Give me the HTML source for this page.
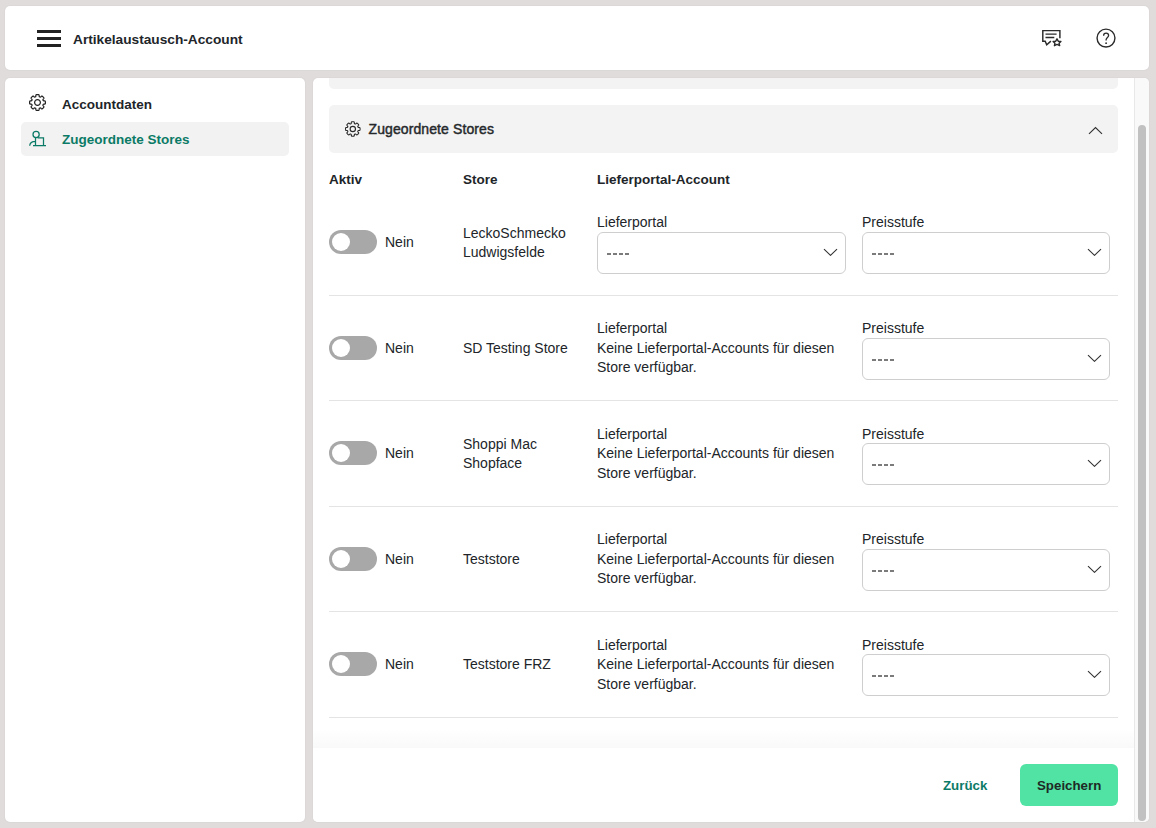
<!DOCTYPE html>
<html><head><meta charset="utf-8">
<style>
*{box-sizing:border-box;margin:0;padding:0}
html,body{width:1156px;height:828px;overflow:hidden}
body{background:#e0dcdb;font-family:"Liberation Sans",sans-serif;color:#212529;font-size:14px;position:relative}
.card{position:absolute;background:#fff;border-radius:5px;overflow:hidden;box-shadow:0 0 2px rgba(0,0,0,0.07)}
#hdr{left:5px;top:6px;width:1144px;height:64px}
#side{left:5px;top:78px;width:300px;height:744px}
#main{left:313px;top:78px;width:836px;height:744px}
.abs{position:absolute}
.ham{position:absolute;left:32px;width:24px;height:3px;background:#222}
.title{position:absolute;left:68px;top:24px;font-weight:700;font-size:13.7px;line-height:20px;white-space:nowrap}
.nav{position:absolute;left:16px;width:268px;height:34px;border-radius:5px}
.nav .t{position:absolute;left:41px;top:9px;font-weight:700;font-size:13.5px;line-height:20px;white-space:nowrap}
.nav.act{background:#f2f2f2}
.nav.act .t{color:#0b7a66}
.lbl{white-space:nowrap;line-height:20px}
.nm{line-height:19.4px}
.th{font-weight:700;font-size:13.5px}
.sh{left:55.5px;top:41px;font-weight:400;font-size:14px;-webkit-text-stroke:0.45px #26292c;letter-spacing:0.1px;line-height:20px;white-space:nowrap;color:#26292c}
.b{font-weight:700}
.sel{position:absolute;height:42px;border:1px solid #cecece;border-radius:6px;background:#fff}
.sel .v{position:absolute;left:9px;top:20px;width:22px;height:2px;background:repeating-linear-gradient(to right,#7b7b7b 0 4px,transparent 4px 6px)}
.tog{position:absolute;left:16px;width:48px;height:24px;border-radius:12px;background:#a8a8a8}
.tog::after{content:"";position:absolute;left:3px;top:3px;width:18px;height:18px;border-radius:50%;background:#fff}
.div{position:absolute;left:16px;width:789px;height:1px;background:#e4e4e4}
</style></head><body>
<div id="hdr" class="card">
  <div class="ham" style="top:24px"></div>
  <div class="ham" style="top:31px"></div>
  <div class="ham" style="top:38px"></div>
  <div class="title">Artikelaustausch-Account</div>
</div>
<svg class="abs" style="left:1036px;top:24px" width="34" height="32" viewBox="1036 24 34 32"><g fill="none" stroke="#2b2b2b" stroke-width="1.45" stroke-linejoin="miter"><path d="M1059.9 38.3 V30.6 H1042.8 V41.2 H1045.2 L1046.7 44.8 L1050.9 41.1"/><path d="M1045.5 34.1 H1056.6 M1045.5 37.45 H1054.3" stroke-width="1.4"/><g transform="translate(1057 42.3) scale(1.12) translate(-1057 -42.3)"><path d="M1057 39.2 L1058.1 41.3 L1060.5 41.5 L1058.8 43.1 L1059.4 45.3 L1057 44.2 L1054.7 45.3 L1055.2 43.1 L1053.5 41.5 L1055.9 41.3 Z" stroke-width="1.25" stroke-linejoin="round"/></g></g></svg>
<svg class="abs" style="left:1095px;top:27px" width="22" height="22" viewBox="1095 27 22 22"><g fill="none" stroke="#2b2b2b" stroke-width="1.4"><circle cx="1106" cy="38.1" r="8.95"/><path d="M1103.6 35.7 C1103.6 34.1 1104.7 33.2 1106.1 33.2 C1107.5 33.2 1108.6 34.1 1108.6 35.5 C1108.6 37.4 1106.1 37.6 1106.1 39.8 V40.6" stroke-width="1.3"/></g><circle cx="1106.1" cy="43.2" r="0.9" fill="#2b2b2b"/></svg>
<div id="side" class="card">
  <svg class="abs" style="left:22px;top:14px" width="20" height="20" viewBox="-10.50 -10.50 20 20"><g transform="scale(1.0)" fill="none" stroke="#222" stroke-width="1.2"><path d="M0.00 -7.90 L0.12 -7.90 L0.25 -7.90 L0.37 -7.89 L0.50 -7.88 L0.62 -7.87 L0.74 -7.86 L0.87 -7.85 L0.99 -7.83 L1.11 -7.80 L1.23 -7.77 L1.35 -7.71 L1.45 -7.61 L1.54 -7.45 L1.61 -7.19 L1.65 -6.85 L1.67 -6.50 L1.70 -6.21 L1.75 -6.01 L1.81 -5.87 L1.88 -5.78 L1.96 -5.71 L2.04 -5.66 L2.12 -5.62 L2.21 -5.58 L2.30 -5.54 L2.38 -5.51 L2.47 -5.48 L2.56 -5.45 L2.66 -5.42 L2.76 -5.42 L2.87 -5.43 L3.01 -5.48 L3.19 -5.59 L3.42 -5.78 L3.68 -6.01 L3.95 -6.22 L4.18 -6.36 L4.36 -6.41 L4.50 -6.40 L4.62 -6.36 L4.73 -6.30 L4.84 -6.24 L4.94 -6.16 L5.03 -6.09 L5.13 -6.01 L5.22 -5.93 L5.32 -5.84 L5.41 -5.76 L5.50 -5.67 L5.59 -5.59 L5.67 -5.50 L5.76 -5.41 L5.84 -5.32 L5.93 -5.22 L6.01 -5.13 L6.09 -5.03 L6.16 -4.94 L6.24 -4.84 L6.30 -4.73 L6.36 -4.62 L6.40 -4.50 L6.41 -4.36 L6.36 -4.18 L6.22 -3.95 L6.01 -3.68 L5.78 -3.42 L5.59 -3.19 L5.48 -3.01 L5.43 -2.87 L5.42 -2.76 L5.42 -2.66 L5.45 -2.56 L5.48 -2.47 L5.51 -2.38 L5.54 -2.30 L5.58 -2.21 L5.62 -2.12 L5.66 -2.04 L5.71 -1.96 L5.78 -1.88 L5.87 -1.81 L6.01 -1.75 L6.21 -1.70 L6.50 -1.67 L6.85 -1.65 L7.19 -1.61 L7.45 -1.54 L7.61 -1.45 L7.71 -1.35 L7.77 -1.23 L7.80 -1.11 L7.83 -0.99 L7.85 -0.87 L7.86 -0.74 L7.87 -0.62 L7.88 -0.50 L7.89 -0.37 L7.90 -0.25 L7.90 -0.12 L7.90 -0.00 L7.90 0.12 L7.90 0.25 L7.89 0.37 L7.88 0.50 L7.87 0.62 L7.86 0.74 L7.85 0.87 L7.83 0.99 L7.80 1.11 L7.77 1.23 L7.71 1.35 L7.61 1.45 L7.45 1.54 L7.19 1.61 L6.85 1.65 L6.50 1.67 L6.21 1.70 L6.01 1.75 L5.87 1.81 L5.78 1.88 L5.71 1.96 L5.66 2.04 L5.62 2.12 L5.58 2.21 L5.54 2.30 L5.51 2.38 L5.48 2.47 L5.45 2.56 L5.42 2.66 L5.42 2.76 L5.43 2.87 L5.48 3.01 L5.59 3.19 L5.78 3.42 L6.01 3.68 L6.22 3.95 L6.36 4.18 L6.41 4.36 L6.40 4.50 L6.36 4.62 L6.30 4.73 L6.24 4.84 L6.16 4.94 L6.09 5.03 L6.01 5.13 L5.93 5.22 L5.84 5.32 L5.76 5.41 L5.67 5.50 L5.59 5.59 L5.50 5.67 L5.41 5.76 L5.32 5.84 L5.22 5.93 L5.13 6.01 L5.03 6.09 L4.94 6.16 L4.84 6.24 L4.73 6.30 L4.62 6.36 L4.50 6.40 L4.36 6.41 L4.18 6.36 L3.95 6.22 L3.68 6.01 L3.42 5.78 L3.19 5.59 L3.01 5.48 L2.87 5.43 L2.76 5.42 L2.66 5.42 L2.56 5.45 L2.47 5.48 L2.38 5.51 L2.30 5.54 L2.21 5.58 L2.12 5.62 L2.04 5.66 L1.96 5.71 L1.88 5.78 L1.81 5.87 L1.75 6.01 L1.70 6.21 L1.67 6.50 L1.65 6.85 L1.61 7.19 L1.54 7.45 L1.45 7.61 L1.35 7.71 L1.23 7.77 L1.11 7.80 L0.99 7.83 L0.87 7.85 L0.74 7.86 L0.62 7.87 L0.50 7.88 L0.37 7.89 L0.25 7.90 L0.12 7.90 L0.00 7.90 L-0.12 7.90 L-0.25 7.90 L-0.37 7.89 L-0.50 7.88 L-0.62 7.87 L-0.74 7.86 L-0.87 7.85 L-0.99 7.83 L-1.11 7.80 L-1.23 7.77 L-1.35 7.71 L-1.45 7.61 L-1.54 7.45 L-1.61 7.19 L-1.65 6.85 L-1.67 6.50 L-1.70 6.21 L-1.75 6.01 L-1.81 5.87 L-1.88 5.78 L-1.96 5.71 L-2.04 5.66 L-2.12 5.62 L-2.21 5.58 L-2.30 5.54 L-2.38 5.51 L-2.47 5.48 L-2.56 5.45 L-2.66 5.42 L-2.76 5.42 L-2.87 5.43 L-3.01 5.48 L-3.19 5.59 L-3.42 5.78 L-3.68 6.01 L-3.95 6.22 L-4.18 6.36 L-4.36 6.41 L-4.50 6.40 L-4.62 6.36 L-4.73 6.30 L-4.84 6.24 L-4.94 6.16 L-5.03 6.09 L-5.13 6.01 L-5.22 5.93 L-5.32 5.84 L-5.41 5.76 L-5.50 5.67 L-5.59 5.59 L-5.67 5.50 L-5.76 5.41 L-5.84 5.32 L-5.93 5.22 L-6.01 5.13 L-6.09 5.03 L-6.16 4.94 L-6.24 4.84 L-6.30 4.73 L-6.36 4.62 L-6.40 4.50 L-6.41 4.36 L-6.36 4.18 L-6.22 3.95 L-6.01 3.68 L-5.78 3.42 L-5.59 3.19 L-5.48 3.01 L-5.43 2.87 L-5.42 2.76 L-5.42 2.66 L-5.45 2.56 L-5.48 2.47 L-5.51 2.38 L-5.54 2.30 L-5.58 2.21 L-5.62 2.12 L-5.66 2.04 L-5.71 1.96 L-5.78 1.88 L-5.87 1.81 L-6.01 1.75 L-6.21 1.70 L-6.50 1.67 L-6.85 1.65 L-7.19 1.61 L-7.45 1.54 L-7.61 1.45 L-7.71 1.35 L-7.77 1.23 L-7.80 1.11 L-7.83 0.99 L-7.85 0.87 L-7.86 0.74 L-7.87 0.62 L-7.88 0.50 L-7.89 0.37 L-7.90 0.25 L-7.90 0.12 L-7.90 0.00 L-7.90 -0.12 L-7.90 -0.25 L-7.89 -0.37 L-7.88 -0.50 L-7.87 -0.62 L-7.86 -0.74 L-7.85 -0.87 L-7.83 -0.99 L-7.80 -1.11 L-7.77 -1.23 L-7.71 -1.35 L-7.61 -1.45 L-7.45 -1.54 L-7.19 -1.61 L-6.85 -1.65 L-6.50 -1.67 L-6.21 -1.70 L-6.01 -1.75 L-5.87 -1.81 L-5.78 -1.88 L-5.71 -1.96 L-5.66 -2.04 L-5.62 -2.12 L-5.58 -2.21 L-5.54 -2.30 L-5.51 -2.38 L-5.48 -2.47 L-5.45 -2.56 L-5.42 -2.66 L-5.42 -2.76 L-5.43 -2.87 L-5.48 -3.01 L-5.59 -3.19 L-5.78 -3.42 L-6.01 -3.68 L-6.22 -3.95 L-6.36 -4.18 L-6.41 -4.36 L-6.40 -4.50 L-6.36 -4.62 L-6.30 -4.73 L-6.24 -4.84 L-6.16 -4.94 L-6.09 -5.03 L-6.01 -5.13 L-5.93 -5.22 L-5.84 -5.32 L-5.76 -5.41 L-5.67 -5.50 L-5.59 -5.59 L-5.50 -5.67 L-5.41 -5.76 L-5.32 -5.84 L-5.22 -5.93 L-5.13 -6.01 L-5.03 -6.09 L-4.94 -6.16 L-4.84 -6.24 L-4.73 -6.30 L-4.62 -6.36 L-4.50 -6.40 L-4.36 -6.41 L-4.18 -6.36 L-3.95 -6.22 L-3.68 -6.01 L-3.42 -5.78 L-3.19 -5.59 L-3.01 -5.48 L-2.87 -5.43 L-2.76 -5.42 L-2.66 -5.42 L-2.56 -5.45 L-2.47 -5.48 L-2.38 -5.51 L-2.30 -5.54 L-2.21 -5.58 L-2.12 -5.62 L-2.04 -5.66 L-1.96 -5.71 L-1.88 -5.78 L-1.81 -5.87 L-1.75 -6.01 L-1.70 -6.21 L-1.67 -6.50 L-1.65 -6.85 L-1.61 -7.19 L-1.54 -7.45 L-1.45 -7.61 L-1.35 -7.71 L-1.23 -7.77 L-1.11 -7.80 L-0.99 -7.83 L-0.87 -7.85 L-0.74 -7.86 L-0.62 -7.87 L-0.50 -7.88 L-0.37 -7.89 L-0.25 -7.90 L-0.12 -7.90Z"/><circle r="2.9"/></g></svg>
  <div class="nav" style="top:8px">
    <div class="t">Accountdaten</div>
  </div>
  <div class="nav act" style="top:44px">
    <div class="t" style="top:8px">Zugeordnete Stores</div>
  </div>
  <svg class="abs" style="left:19px;top:48px" width="28" height="26" viewBox="24 126 28 26"><g fill="none" stroke="#0b7a66" stroke-width="1.25"><circle cx="36.1" cy="134.5" r="3.1"/><path d="M35.5 137.6 V145.5 M37.6 137.9 H43.5 V145.5 M33 145.5 H46 M29.7 145.8 C29.9 143 32 141.4 35.5 141.4"/></g></svg>
</div>
<div id="main" class="card">
<div class="abs" style="left:16px;top:-40px;width:789px;height:50.5px;background:#f3f3f3;border-radius:5px"></div>
<div class="abs" style="left:16px;top:27px;width:789px;height:48px;background:#f3f3f3;border-radius:5px"></div>
<svg class="abs" style="left:29px;top:41px" width="20" height="20" viewBox="-10.80 -10.00 20 20"><g transform="scale(0.92)" fill="none" stroke="#2b2b2b" stroke-width="1.1956521739130435"><path d="M0.00 -7.90 L0.12 -7.90 L0.25 -7.90 L0.37 -7.89 L0.50 -7.88 L0.62 -7.87 L0.74 -7.86 L0.87 -7.85 L0.99 -7.83 L1.11 -7.80 L1.23 -7.77 L1.35 -7.71 L1.45 -7.61 L1.54 -7.45 L1.61 -7.19 L1.65 -6.85 L1.67 -6.50 L1.70 -6.21 L1.75 -6.01 L1.81 -5.87 L1.88 -5.78 L1.96 -5.71 L2.04 -5.66 L2.12 -5.62 L2.21 -5.58 L2.30 -5.54 L2.38 -5.51 L2.47 -5.48 L2.56 -5.45 L2.66 -5.42 L2.76 -5.42 L2.87 -5.43 L3.01 -5.48 L3.19 -5.59 L3.42 -5.78 L3.68 -6.01 L3.95 -6.22 L4.18 -6.36 L4.36 -6.41 L4.50 -6.40 L4.62 -6.36 L4.73 -6.30 L4.84 -6.24 L4.94 -6.16 L5.03 -6.09 L5.13 -6.01 L5.22 -5.93 L5.32 -5.84 L5.41 -5.76 L5.50 -5.67 L5.59 -5.59 L5.67 -5.50 L5.76 -5.41 L5.84 -5.32 L5.93 -5.22 L6.01 -5.13 L6.09 -5.03 L6.16 -4.94 L6.24 -4.84 L6.30 -4.73 L6.36 -4.62 L6.40 -4.50 L6.41 -4.36 L6.36 -4.18 L6.22 -3.95 L6.01 -3.68 L5.78 -3.42 L5.59 -3.19 L5.48 -3.01 L5.43 -2.87 L5.42 -2.76 L5.42 -2.66 L5.45 -2.56 L5.48 -2.47 L5.51 -2.38 L5.54 -2.30 L5.58 -2.21 L5.62 -2.12 L5.66 -2.04 L5.71 -1.96 L5.78 -1.88 L5.87 -1.81 L6.01 -1.75 L6.21 -1.70 L6.50 -1.67 L6.85 -1.65 L7.19 -1.61 L7.45 -1.54 L7.61 -1.45 L7.71 -1.35 L7.77 -1.23 L7.80 -1.11 L7.83 -0.99 L7.85 -0.87 L7.86 -0.74 L7.87 -0.62 L7.88 -0.50 L7.89 -0.37 L7.90 -0.25 L7.90 -0.12 L7.90 -0.00 L7.90 0.12 L7.90 0.25 L7.89 0.37 L7.88 0.50 L7.87 0.62 L7.86 0.74 L7.85 0.87 L7.83 0.99 L7.80 1.11 L7.77 1.23 L7.71 1.35 L7.61 1.45 L7.45 1.54 L7.19 1.61 L6.85 1.65 L6.50 1.67 L6.21 1.70 L6.01 1.75 L5.87 1.81 L5.78 1.88 L5.71 1.96 L5.66 2.04 L5.62 2.12 L5.58 2.21 L5.54 2.30 L5.51 2.38 L5.48 2.47 L5.45 2.56 L5.42 2.66 L5.42 2.76 L5.43 2.87 L5.48 3.01 L5.59 3.19 L5.78 3.42 L6.01 3.68 L6.22 3.95 L6.36 4.18 L6.41 4.36 L6.40 4.50 L6.36 4.62 L6.30 4.73 L6.24 4.84 L6.16 4.94 L6.09 5.03 L6.01 5.13 L5.93 5.22 L5.84 5.32 L5.76 5.41 L5.67 5.50 L5.59 5.59 L5.50 5.67 L5.41 5.76 L5.32 5.84 L5.22 5.93 L5.13 6.01 L5.03 6.09 L4.94 6.16 L4.84 6.24 L4.73 6.30 L4.62 6.36 L4.50 6.40 L4.36 6.41 L4.18 6.36 L3.95 6.22 L3.68 6.01 L3.42 5.78 L3.19 5.59 L3.01 5.48 L2.87 5.43 L2.76 5.42 L2.66 5.42 L2.56 5.45 L2.47 5.48 L2.38 5.51 L2.30 5.54 L2.21 5.58 L2.12 5.62 L2.04 5.66 L1.96 5.71 L1.88 5.78 L1.81 5.87 L1.75 6.01 L1.70 6.21 L1.67 6.50 L1.65 6.85 L1.61 7.19 L1.54 7.45 L1.45 7.61 L1.35 7.71 L1.23 7.77 L1.11 7.80 L0.99 7.83 L0.87 7.85 L0.74 7.86 L0.62 7.87 L0.50 7.88 L0.37 7.89 L0.25 7.90 L0.12 7.90 L0.00 7.90 L-0.12 7.90 L-0.25 7.90 L-0.37 7.89 L-0.50 7.88 L-0.62 7.87 L-0.74 7.86 L-0.87 7.85 L-0.99 7.83 L-1.11 7.80 L-1.23 7.77 L-1.35 7.71 L-1.45 7.61 L-1.54 7.45 L-1.61 7.19 L-1.65 6.85 L-1.67 6.50 L-1.70 6.21 L-1.75 6.01 L-1.81 5.87 L-1.88 5.78 L-1.96 5.71 L-2.04 5.66 L-2.12 5.62 L-2.21 5.58 L-2.30 5.54 L-2.38 5.51 L-2.47 5.48 L-2.56 5.45 L-2.66 5.42 L-2.76 5.42 L-2.87 5.43 L-3.01 5.48 L-3.19 5.59 L-3.42 5.78 L-3.68 6.01 L-3.95 6.22 L-4.18 6.36 L-4.36 6.41 L-4.50 6.40 L-4.62 6.36 L-4.73 6.30 L-4.84 6.24 L-4.94 6.16 L-5.03 6.09 L-5.13 6.01 L-5.22 5.93 L-5.32 5.84 L-5.41 5.76 L-5.50 5.67 L-5.59 5.59 L-5.67 5.50 L-5.76 5.41 L-5.84 5.32 L-5.93 5.22 L-6.01 5.13 L-6.09 5.03 L-6.16 4.94 L-6.24 4.84 L-6.30 4.73 L-6.36 4.62 L-6.40 4.50 L-6.41 4.36 L-6.36 4.18 L-6.22 3.95 L-6.01 3.68 L-5.78 3.42 L-5.59 3.19 L-5.48 3.01 L-5.43 2.87 L-5.42 2.76 L-5.42 2.66 L-5.45 2.56 L-5.48 2.47 L-5.51 2.38 L-5.54 2.30 L-5.58 2.21 L-5.62 2.12 L-5.66 2.04 L-5.71 1.96 L-5.78 1.88 L-5.87 1.81 L-6.01 1.75 L-6.21 1.70 L-6.50 1.67 L-6.85 1.65 L-7.19 1.61 L-7.45 1.54 L-7.61 1.45 L-7.71 1.35 L-7.77 1.23 L-7.80 1.11 L-7.83 0.99 L-7.85 0.87 L-7.86 0.74 L-7.87 0.62 L-7.88 0.50 L-7.89 0.37 L-7.90 0.25 L-7.90 0.12 L-7.90 0.00 L-7.90 -0.12 L-7.90 -0.25 L-7.89 -0.37 L-7.88 -0.50 L-7.87 -0.62 L-7.86 -0.74 L-7.85 -0.87 L-7.83 -0.99 L-7.80 -1.11 L-7.77 -1.23 L-7.71 -1.35 L-7.61 -1.45 L-7.45 -1.54 L-7.19 -1.61 L-6.85 -1.65 L-6.50 -1.67 L-6.21 -1.70 L-6.01 -1.75 L-5.87 -1.81 L-5.78 -1.88 L-5.71 -1.96 L-5.66 -2.04 L-5.62 -2.12 L-5.58 -2.21 L-5.54 -2.30 L-5.51 -2.38 L-5.48 -2.47 L-5.45 -2.56 L-5.42 -2.66 L-5.42 -2.76 L-5.43 -2.87 L-5.48 -3.01 L-5.59 -3.19 L-5.78 -3.42 L-6.01 -3.68 L-6.22 -3.95 L-6.36 -4.18 L-6.41 -4.36 L-6.40 -4.50 L-6.36 -4.62 L-6.30 -4.73 L-6.24 -4.84 L-6.16 -4.94 L-6.09 -5.03 L-6.01 -5.13 L-5.93 -5.22 L-5.84 -5.32 L-5.76 -5.41 L-5.67 -5.50 L-5.59 -5.59 L-5.50 -5.67 L-5.41 -5.76 L-5.32 -5.84 L-5.22 -5.93 L-5.13 -6.01 L-5.03 -6.09 L-4.94 -6.16 L-4.84 -6.24 L-4.73 -6.30 L-4.62 -6.36 L-4.50 -6.40 L-4.36 -6.41 L-4.18 -6.36 L-3.95 -6.22 L-3.68 -6.01 L-3.42 -5.78 L-3.19 -5.59 L-3.01 -5.48 L-2.87 -5.43 L-2.76 -5.42 L-2.66 -5.42 L-2.56 -5.45 L-2.47 -5.48 L-2.38 -5.51 L-2.30 -5.54 L-2.21 -5.58 L-2.12 -5.62 L-2.04 -5.66 L-1.96 -5.71 L-1.88 -5.78 L-1.81 -5.87 L-1.75 -6.01 L-1.70 -6.21 L-1.67 -6.50 L-1.65 -6.85 L-1.61 -7.19 L-1.54 -7.45 L-1.45 -7.61 L-1.35 -7.71 L-1.23 -7.77 L-1.11 -7.80 L-0.99 -7.83 L-0.87 -7.85 L-0.74 -7.86 L-0.62 -7.87 L-0.50 -7.88 L-0.37 -7.89 L-0.25 -7.90 L-0.12 -7.90Z"/><circle r="2.9"/></g></svg>
<div class="abs sh">Zugeordnete Stores</div>
<svg class="abs" style="left:775px;top:48px" width="15" height="9" viewBox="0 0 15 9"><path d="M1 7.8 L7.5 1.6 L14 7.8" fill="none" stroke="#333" stroke-width="1.15"/></svg>
<div class="abs lbl th" style="left:16px;top:92px">Aktiv</div>
<div class="abs lbl th" style="left:150px;top:92px">Store</div>
<div class="abs lbl th" style="left:284px;top:92px">Lieferportal-Account</div>
<div class="tog" style="top:152px"></div>
<div class="abs lbl" style="left:72px;top:154px">Nein</div>
<div class="abs lbl" style="left:150px;top:145px">LeckoSchmecko</div>
<div class="abs lbl" style="left:150px;top:164px">Ludwigsfelde</div>
<div class="abs lbl" style="left:284px;top:134px">Lieferportal</div>
<div class="sel" style="left:284px;top:154px;width:249px"><div class="v"></div><svg class="abs" style="left:225px;top:14px" width="15" height="9" viewBox="0 0 15 9"><path d="M1 2.2 L7.5 8.3 L14 2.2" fill="none" stroke="#333" stroke-width="1.15"/></svg></div>
<div class="abs lbl" style="left:549px;top:134px">Preisstufe</div>
<div class="sel" style="left:549px;top:154px;width:248px"><div class="v"></div><svg class="abs" style="left:224px;top:14px" width="15" height="9" viewBox="0 0 15 9"><path d="M1 2.2 L7.5 8.3 L14 2.2" fill="none" stroke="#333" stroke-width="1.15"/></svg></div>
<div class="div" style="top:217px"></div>
<div class="tog" style="top:258px"></div>
<div class="abs lbl" style="left:72px;top:260px">Nein</div>
<div class="abs lbl" style="left:150px;top:260px">SD Testing Store</div>
<div class="abs lbl" style="left:284px;top:240px">Lieferportal</div>
<div class="abs lbl" style="left:284px;top:260px">Keine Lieferportal-Accounts für diesen</div>
<div class="abs lbl" style="left:284px;top:279px">Store verfügbar.</div>
<div class="abs lbl" style="left:549px;top:240px">Preisstufe</div>
<div class="sel" style="left:549px;top:260px;width:248px"><div class="v"></div><svg class="abs" style="left:224px;top:14px" width="15" height="9" viewBox="0 0 15 9"><path d="M1 2.2 L7.5 8.3 L14 2.2" fill="none" stroke="#333" stroke-width="1.15"/></svg></div>
<div class="div" style="top:322px"></div>
<div class="tog" style="top:363px"></div>
<div class="abs lbl" style="left:72px;top:365px">Nein</div>
<div class="abs lbl" style="left:150px;top:356px">Shoppi Mac</div>
<div class="abs lbl" style="left:150px;top:375px">Shopface</div>
<div class="abs lbl" style="left:284px;top:346px">Lieferportal</div>
<div class="abs lbl" style="left:284px;top:365px">Keine Lieferportal-Accounts für diesen</div>
<div class="abs lbl" style="left:284px;top:385px">Store verfügbar.</div>
<div class="abs lbl" style="left:549px;top:346px">Preisstufe</div>
<div class="sel" style="left:549px;top:365px;width:248px"><div class="v"></div><svg class="abs" style="left:224px;top:14px" width="15" height="9" viewBox="0 0 15 9"><path d="M1 2.2 L7.5 8.3 L14 2.2" fill="none" stroke="#333" stroke-width="1.15"/></svg></div>
<div class="div" style="top:428px"></div>
<div class="tog" style="top:469px"></div>
<div class="abs lbl" style="left:72px;top:471px">Nein</div>
<div class="abs lbl" style="left:150px;top:471px">Teststore</div>
<div class="abs lbl" style="left:284px;top:451px">Lieferportal</div>
<div class="abs lbl" style="left:284px;top:471px">Keine Lieferportal-Accounts für diesen</div>
<div class="abs lbl" style="left:284px;top:490px">Store verfügbar.</div>
<div class="abs lbl" style="left:549px;top:451px">Preisstufe</div>
<div class="sel" style="left:549px;top:471px;width:248px"><div class="v"></div><svg class="abs" style="left:224px;top:14px" width="15" height="9" viewBox="0 0 15 9"><path d="M1 2.2 L7.5 8.3 L14 2.2" fill="none" stroke="#333" stroke-width="1.15"/></svg></div>
<div class="div" style="top:533px"></div>
<div class="tog" style="top:574px"></div>
<div class="abs lbl" style="left:72px;top:576px">Nein</div>
<div class="abs lbl" style="left:150px;top:576px">Teststore FRZ</div>
<div class="abs lbl" style="left:284px;top:557px">Lieferportal</div>
<div class="abs lbl" style="left:284px;top:576px">Keine Lieferportal-Accounts für diesen</div>
<div class="abs lbl" style="left:284px;top:596px">Store verfügbar.</div>
<div class="abs lbl" style="left:549px;top:557px">Preisstufe</div>
<div class="sel" style="left:549px;top:576px;width:248px"><div class="v"></div><svg class="abs" style="left:224px;top:14px" width="15" height="9" viewBox="0 0 15 9"><path d="M1 2.2 L7.5 8.3 L14 2.2" fill="none" stroke="#333" stroke-width="1.15"/></svg></div>
<div class="div" style="top:639px"></div>
<div class="abs" style="left:0;top:650px;width:821px;height:20px;background:linear-gradient(to bottom,rgba(0,0,0,0),rgba(0,0,0,0.025))"></div>
<div class="abs" style="left:0;top:670px;width:821px;height:74px;background:#fff"></div>
<div class="abs lbl b" style="left:630px;top:697.6px;color:#0b7a66;font-size:13.3px">Zurück</div>
<div class="abs" style="left:707px;top:686px;width:98px;height:42px;background:#50e3a4;border-radius:6px"></div>
<div class="abs lbl b" style="left:724px;top:697.6px;color:#1f2a26;font-size:13.3px">Speichern</div>
<div class="abs" style="left:821px;top:0;width:15px;height:744px;background:#f9f9f9;border-left:1px solid #e8e8e8"></div>
<div class="abs" style="left:825px;top:47px;width:8px;height:696px;background:#c1c1c1;border-radius:4px"></div>
</div>
</body></html>
